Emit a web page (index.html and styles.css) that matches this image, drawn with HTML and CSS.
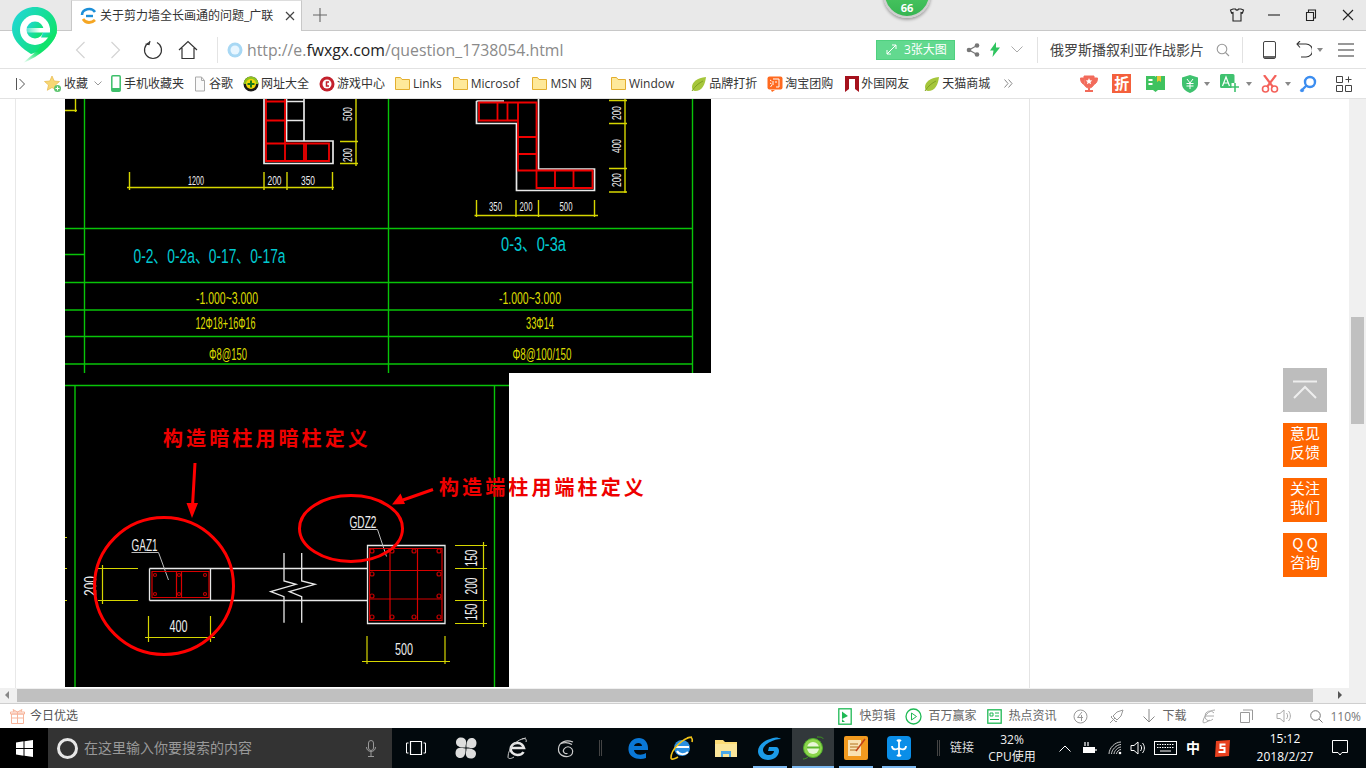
FILE: index.html
```html
<!DOCTYPE html>
<html lang="zh-CN">
<head>
<meta charset="utf-8">
<title>关于剪力墙全长画通的问题_广联达</title>
<link rel="stylesheet" href="styles.css">
</head>
<body>
<div class="browser">
  <header class="tabbar">
    <div class="tab">
      <svg class="tab-fav" width="18" height="18" viewBox="0 0 18 18"><path d="M2 8a7 6 0 0 1 13-3" fill="none" stroke="#1c8fd8" stroke-width="2.6"/><path d="M6 9h7" stroke="#1c8fd8" stroke-width="2.4"/><path d="M3 12c3 5 9 4 12 1" fill="none" stroke="#f5a623" stroke-width="2.8"/></svg>
      <span class="tab-title">关于剪力墙全长画通的问题_广联</span>
      <svg class="tab-close" width="10" height="10" viewBox="0 0 10 10"><path d="M1 1l8 8M9 1l-8 8" stroke="#444" stroke-width="1.2"/></svg>
    </div>
    <svg class="tab-new" width="14" height="14" viewBox="0 0 14 14"><path d="M7 0v14M0 7h14" stroke="#666" stroke-width="1.1"/></svg>
    <div class="win-controls">
      <svg width="16" height="16" viewBox="0 0 16 16"><path d="M4 2h2.500c.5 1.500 2.500 1.500 3 0H12l2.500 1-1 3-1.500-.5V14H4V5.500L2.500 6l-1-3z" fill="none" stroke="#222" stroke-width="1.100"/></svg>
      <svg width="12" height="12" viewBox="0 0 12 12"><path d="M0 6h12" stroke="#222" stroke-width="1.100"/></svg>
      <svg width="12" height="12" viewBox="0 0 12 12"><path d="M1.500 3.500h7v8h-7zM3.500 3.500V1h7v8H8.500" fill="none" stroke="#222" stroke-width="1.100"/></svg>
      <svg width="12" height="12" viewBox="0 0 12 12"><path d="M1 1l10 10M11 1L1 11" stroke="#222" stroke-width="1.100"/></svg>
    </div>
  </header>

  <div class="badge"><span>66</span></div>
  <svg class="logo" width="50" height="58" viewBox="0 0 50 58">
    <defs>
      <linearGradient id="lg" x1="0" y1="0" x2="1" y2="0.6"><stop offset="0" stop-color="#22d6df"/><stop offset="1" stop-color="#0fe36b"/></linearGradient>
      <linearGradient id="tail" x1="1" y1="0" x2="0" y2="1"><stop offset="0" stop-color="#0fe36b"/><stop offset="0.6" stop-color="#0fe36b"/><stop offset="1" stop-color="#0fe36b" stop-opacity="0"/></linearGradient>
      <linearGradient id="bar" x1="0" y1="0" x2="1" y2="0"><stop offset="0" stop-color="#fff" stop-opacity="0.2"/><stop offset="0.6" stop-color="#fff"/></linearGradient>
    </defs>
    <path d="M25 1C12 1 2 11 2 23c0 9 7 17 16 23l3 2c9-3 26-10 26-25C47 11 38 1 25 1z" fill="url(#lg)"/>
    <path d="M47 25C45 38 30 50 13 57c9-8 17-14 20-21z" fill="url(#tail)"/>
    <circle cx="25" cy="24" r="15" fill="#fff"/>
    <circle cx="25" cy="24" r="8.500" fill="url(#lg)"/>
    <rect x="15" y="22" width="25" height="4.500" fill="url(#bar)"/>
    <path d="M33 26.500h8v5H31z" fill="url(#lg)"/>
  </svg>

  <div class="addressbar">
    <div class="nav-group">
      <svg width="11" height="18" viewBox="0 0 11 18"><path d="M9.500 1L1.500 9l8 8" fill="none" stroke="#d4d4d4" stroke-width="1.200"/></svg>
      <svg width="11" height="18" viewBox="0 0 11 18"><path d="M1.500 1l8 8-8 8" fill="none" stroke="#d4d4d4" stroke-width="1.200"/></svg>
      <svg class="ic-reload" width="20" height="20" viewBox="0 0 20 20"><path d="M6 2.500A8.500 8.500 0 1 0 14 2.500M7 1l-1 3.500L2.500 4" fill="none" stroke="#333" stroke-width="1.200"/></svg>
      <svg class="ic-home" width="20" height="20" viewBox="0 0 20 20"><path d="M1 10L10 1.500 19 10M4 8v10.500h12V8" fill="none" stroke="#333" stroke-width="1.200"/></svg>
    </div>
    <div class="url-sep"></div>
    <svg class="ic-site" width="16" height="16" viewBox="0 0 16 16"><circle cx="8" cy="8" r="7.500" fill="#a8d8f4"/><circle cx="8" cy="8" r="4.500" fill="#e8f6ff"/></svg>
    <div class="url"><span class="muted">http://e.</span>fwxgx.com<span class="muted">/question_1738054.html</span></div>
    <div class="big-pic">
      <svg width="11" height="11" viewBox="0 0 11 11"><path d="M1 10L10 1M6 1h4v4M1 6v4h4" fill="none" stroke="#fff" stroke-width="1"/></svg>
      <span>3张大图</span>
    </div>
    <svg class="ic-share" width="14" height="14" viewBox="0 0 14 14"><path d="M11 2.500L3 7l8 4.500" fill="none" stroke="#777" stroke-width="1.200"/><circle cx="11" cy="2.500" r="2.300" fill="#777"/><circle cx="3" cy="7" r="2.300" fill="#777"/><circle cx="11" cy="11.500" r="2.300" fill="#777"/></svg>
    <svg class="ic-bolt" width="10" height="15" viewBox="0 0 10 15"><path d="M6 0L0 8.500h3.500L2.500 15 10 5.500H6z" fill="#2fc45f"/></svg>
    <svg class="ic-down" width="12" height="7" viewBox="0 0 12 7"><path d="M.5.500L6 6 11.500.500" fill="none" stroke="#aaa"/></svg>
    <div class="bar-sep"></div>
    <span class="search-text">俄罗斯播叙利亚作战影片</span>
    <svg class="ic-search" width="14" height="14" viewBox="0 0 14 14"><circle cx="6" cy="6" r="4.800" fill="none" stroke="#999" stroke-width="1.100"/><path d="M9.500 9.500L13 13" stroke="#999" stroke-width="1.100"/></svg>
    <div class="bar-sep sep2"></div>
    <svg class="ic-phone" width="13" height="18" viewBox="0 0 13 18"><rect x=".5" y=".5" width="12" height="17" rx="1.500" fill="none" stroke="#444"/><path d="M1 15h11v2H1z" fill="#666"/></svg>
    <svg class="ic-undo" width="16" height="18" viewBox="0 0 16 18"><path d="M1 3h9a5 5 0 0 1 0 13H5M4 0L1 3l3 3.500" fill="none" stroke="#333" stroke-width="1.100"/></svg>
    <span class="caret"></span>
    <svg class="ic-menu" width="16" height="14" viewBox="0 0 16 14"><path d="M0 1h16M0 7h16M0 13h16" stroke="#333" stroke-width="1.200"/></svg>
  </div>

  <nav class="bookmarks">
    <svg class="ic-side" width="9" height="12" viewBox="0 0 9 12"><path d="M.5 0v12M3.500 1L8.500 6l-5 5" fill="none" stroke="#555"/></svg>
    <div class="bm"><svg width="18" height="18" viewBox="0 0 18 18"><path d="M8 1l2.200 5 5.300.5-4 3.500 1.200 5.300L8 12.500 3.300 15.300 4.500 10 .5 6.500 5.800 6z" fill="#f7d774" stroke="#e8b84a" stroke-width=".7"/><circle cx="13.500" cy="13.500" r="3.500" fill="#5cc46e"/><path d="M11.500 13.500h4M13.500 11.500v4" stroke="#fff"/></svg><span>收藏</span><svg class="bm-caret" width="8" height="5" viewBox="0 0 8 5"><path d="M.5.500L4 4 7.500.500" fill="none" stroke="#999"/></svg></div>
    <div class="bm bm-phone"><svg width="10" height="17" viewBox="0 0 10 17"><rect x=".8" y=".8" width="8.400" height="15.400" rx="1" fill="#fff" stroke="#3dbf6a" stroke-width="1.500"/><path d="M1 13h8v3H1z" fill="#3dbf6a"/></svg><span>手机收藏夹</span></div>
    <div class="bm"><svg width="14" height="16" viewBox="0 0 14 16"><path d="M2.500 1h6l3 3.500V15h-9z" fill="#fafafa" stroke="#aaa"/><path d="M8.500 1v3.500h3" fill="none" stroke="#aaa"/></svg><span>谷歌</span></div>
    <div class="bm"><svg width="16" height="16" viewBox="0 0 16 16"><circle cx="8" cy="8" r="7.500" fill="#1b1b1b"/><path d="M8 .5A7.500 7.500 0 0 1 15.500 8H.5A7.500 7.500 0 0 1 8 .5z" fill="#8fc31f"/><circle cx="8" cy="8" r="5" fill="#f5d90a"/><path d="M8 4.500v7M4.500 8h7" stroke="#1c7a1c" stroke-width="2"/></svg><span>网址大全</span></div>
    <div class="bm"><svg width="16" height="16" viewBox="0 0 16 16"><circle cx="8" cy="8" r="7.500" fill="#c3202c"/><circle cx="8" cy="8" r="4.500" fill="#fff"/><path d="M10 6H7.500v4H10" fill="none" stroke="#c3202c" stroke-width="1.500"/></svg><span>游戏中心</span></div>
    <div class="bm bm-f bm-links"><svg width="15" height="13" viewBox="0 0 15 13"><path d="M.5 12.500V.5h5l1.500 2h7.500v10z" fill="#fee99a" stroke="#e3ae2e"/></svg><span>Links</span></div>
    <div class="bm bm-f bm-ms"><svg width="15" height="13" viewBox="0 0 15 13"><path d="M.5 12.500V.5h5l1.500 2h7.500v10z" fill="#fee99a" stroke="#e3ae2e"/></svg><span>Microsof</span></div>
    <div class="bm bm-f bm-msn"><svg width="15" height="13" viewBox="0 0 15 13"><path d="M.5 12.500V.5h5l1.500 2h7.500v10z" fill="#fee99a" stroke="#e3ae2e"/></svg><span>MSN 网</span></div>
    <div class="bm bm-f bm-win"><svg width="15" height="13" viewBox="0 0 15 13"><path d="M.5 12.500V.5h5l1.500 2h7.500v10z" fill="#fee99a" stroke="#e3ae2e"/></svg><span>Window</span></div>
    <div class="bm"><svg width="16" height="16" viewBox="0 0 16 16"><path d="M15 1C6 2 1 6 1 11c0 2 1 4 3 4 7 0 10-6 11-14z" fill="#a5c63b"/><path d="M1 15C4 10 8 7 12 5" stroke="#7f9f23" fill="none"/></svg><span>品牌打折</span></div>
    <div class="bm bm-tao"><svg width="16" height="16" viewBox="0 0 16 16"><rect x=".5" y=".5" width="15" height="13" rx="2" fill="#ff6a1f"/><path d="M4 14l1 2 3-2z" fill="#ff6a1f"/><path d="M3 4l1.500 1M3 7l1.500 1M3.500 11l1.500-2M6 3h6v8H9M6 5v4M8 6h2" stroke="#fff" fill="none"/></svg><span>淘宝团购</span></div>
    <div class="bm bm-wai"><svg width="14" height="16" viewBox="0 0 14 16"><path d="M0 0h14v16l-4-3V3H4v10l-4 3z" fill="#a5111c"/></svg><span>外国网友</span></div>
    <div class="bm"><svg width="16" height="16" viewBox="0 0 16 16"><path d="M15 1C6 2 1 6 1 11c0 2 1 4 3 4 7 0 10-6 11-14z" fill="#a5c63b"/><path d="M1 15C4 10 8 7 12 5" stroke="#7f9f23" fill="none"/></svg><span>天猫商城</span></div>
    <svg class="bm-more" width="9" height="9" viewBox="0 0 9 9"><path d="M.5.500L4 4.500l-3.500 4M4.500.500L8 4.500l-3.500 4" fill="none" stroke="#888"/></svg>
    <div class="bm-tools">
      <svg class="t-trophy" width="20" height="18" viewBox="0 0 20 18"><path d="M5 1h10v7a5 5 0 0 1-10 0zM5 3H1.500c0 4 1.500 6 4 6.500M15 3h3.500c0 4-1.500 6-4 6.500" fill="#f26b5b" stroke="#f26b5b"/><path d="M10 3l1 2.200 2.300.2-1.800 1.500.6 2.300L10 7.900 7.900 9.200l.6-2.300-1.800-1.500L9 5.200z" fill="#fff"/><path d="M9 13h2v2h3v2H6v-2h3z" fill="#f26b5b"/></svg>
      <div class="t-zhe">折</div>
      <svg class="t-book" width="19" height="18" viewBox="0 0 19 18"><path d="M0 1h8c1 0 1.500.5 1.500 1 0-.5.5-1 1.500-1h8v14h-7l-2.500 2-2.500-2H0z" fill="#3fc25f"/><path d="M11 1h4v6l-2-1.500L11 7z" fill="#e6c636"/><path d="M2.500 4h4v2h-4zM2.500 8h4v2h-4z" fill="#fff"/></svg>
      <svg class="t-shield" width="16" height="18" viewBox="0 0 16 18"><path d="M8 0l8 2.500V9c0 4-3.500 7.500-8 9-4.500-1.500-8-5-8-9V2.500z" fill="#3fc26f"/><path d="M5 4l3 4 3-4M4.500 8.500h7M4.500 11h7M8 8v6" stroke="#fff" fill="none"/></svg>
      <span class="caret c-shield"></span>
      <svg class="t-aplus" width="20" height="19" viewBox="0 0 20 19"><path d="M1.500 0h11.500a1.500 1.500 0 0 1 1.500 1.500V9h-3v5H1.500A1.500 1.500 0 0 1 0 12.500v-11A1.500 1.500 0 0 1 1.500 0z" fill="#3fc26f"/><path d="M2.500 12L6 3l3.500 9M4 9h4" stroke="#fff" fill="none" stroke-width="1.200"/><path d="M15 9v4h4M15 13h-4M15 13v5" stroke="#3fc26f" stroke-width="1.600" fill="none"/></svg>
      <span class="caret c-aplus"></span>
      <svg class="t-cut" width="18" height="18" viewBox="0 0 18 18"><path d="M3 0l9 12M15 0L6 12" stroke="#f4625b" stroke-width="2.200"/><circle cx="4.500" cy="14" r="3" fill="none" stroke="#f4625b" stroke-width="1.600"/><circle cx="13.500" cy="14" r="3" fill="none" stroke="#f4625b" stroke-width="1.600"/></svg>
      <span class="caret c-cut"></span>
      <svg class="t-key" width="18" height="18" viewBox="0 0 18 18"><circle cx="11" cy="7" r="5" fill="none" stroke="#3c8df0" stroke-width="2.400"/><path d="M7.500 10.500L1.500 16.500M2 14l2.500 2.500" stroke="#3c8df0" stroke-width="2.400"/></svg>
      <svg class="t-grid" width="16" height="16" viewBox="0 0 16 16"><path d="M.5.500h6v6h-6zM.5 9.500h6v6h-6zM9.500 9.500h6v6h-6zM12.500.500v6M9.500 3.500h6" fill="none" stroke="#444"/></svg>
    </div>
  </nav>

  <main class="viewport">
    <div class="page">
      <svg class="cad" viewBox="65 99 600 588" width="600" height="588" role="img" aria-label="剪力墙构造图">
        <rect x="65" y="99" width="646" height="274" fill="#000"/>
        <rect x="65" y="373" width="444" height="314" fill="#000"/>

        <g class="g-green">
          <path d="M65 228.500H692.500M65 254.500H84.500M65 282.500H692.500M65 310H692.500M65 336.500H692.500M65 364H692.500"/>
          <path d="M84.500 99V373M388.500 99V373M692.500 99V373"/>
          <path d="M65 385.500H509M75 385V687M494.500 385V687"/>
        </g>

        <g class="g-white g-white-bold">
          <path d="M264 99V163.500H333V141H286.500V99M304 99V141M286.500 101.500H304M286.500 120.500H304"/>
          <path d="M476.500 101V123.500H516.500V190.500H594.500V169H538.500V99M476.500 101H504"/>
        </g>
        <g class="g-red">
          <path d="M266 99V161H329V143.500H266M266 101.500H285M266 120.500H285M285 99V161M304 143.500V161M306 143.500V161"/>
          <path d="M479 102.500H536.500V188H592.500V170.500H518V120.500H479ZM497.500 102.500V120.500M507.500 102.500V120.500M518 102.500V120.500M518 137H536.500M518 154H536.500M536.500 170.500V188M555 170.500V188M573.500 170.500V188"/>
        </g>

        <g class="g-yellow g-yellow-bold">
          <path d="M127 187.500H334M129.500 172V190M264 172V190M287 172V190M332.500 172V190"/>
          <path d="M356 99V166M340 141.500H358M340 163.500H358M65 110.500H77M75.500 99V112"/>
          <path d="M625 99V193M609 100.500H627M609 123.500H627M609 168.500H627M609 192H627"/>
          <path d="M474.500 215.500H598M476.500 200V217M516 200V217M538.500 200V217M594.500 200V217"/>
        </g>

        <g class="t-dim">
          <text x="196" y="184.500" textLength="16" lengthAdjust="spacingAndGlyphs">1200</text>
          <text x="274.500" y="184.500" textLength="14" lengthAdjust="spacingAndGlyphs">200</text>
          <text x="308" y="184.500" textLength="14" lengthAdjust="spacingAndGlyphs">350</text>
          <text transform="translate(352 114) rotate(-90)" textLength="14" lengthAdjust="spacingAndGlyphs">500</text>
          <text transform="translate(352 155) rotate(-90)" textLength="14" lengthAdjust="spacingAndGlyphs">200</text>
          <text transform="translate(621 113) rotate(-90)" textLength="14" lengthAdjust="spacingAndGlyphs">200</text>
          <text transform="translate(621 146) rotate(-90)" textLength="14" lengthAdjust="spacingAndGlyphs">400</text>
          <text transform="translate(621 180) rotate(-90)" textLength="14" lengthAdjust="spacingAndGlyphs">200</text>
          <text x="495.500" y="211" textLength="13" lengthAdjust="spacingAndGlyphs">350</text>
          <text x="526" y="211" textLength="13" lengthAdjust="spacingAndGlyphs">200</text>
          <text x="566" y="211" textLength="13" lengthAdjust="spacingAndGlyphs">500</text>
        </g>

        <g class="t-cyan">
          <text x="209.500" y="263" textLength="152" lengthAdjust="spacingAndGlyphs">0-2、0-2a、0-17、0-17a</text>
          <text x="533.500" y="251" textLength="65" lengthAdjust="spacingAndGlyphs">0-3、0-3a</text>
        </g>
        <g class="t-yellow">
          <text x="227" y="304" textLength="62" lengthAdjust="spacingAndGlyphs">-1.000~3.000</text>
          <text x="530" y="304" textLength="62" lengthAdjust="spacingAndGlyphs">-1.000~3.000</text>
          <text x="225.500" y="329" textLength="60" lengthAdjust="spacingAndGlyphs">12Φ18+16Φ16</text>
          <text x="540" y="329" textLength="28" lengthAdjust="spacingAndGlyphs">33Φ14</text>
          <text x="228" y="360" textLength="38" lengthAdjust="spacingAndGlyphs">Φ8@150</text>
          <text x="542" y="360" textLength="59" lengthAdjust="spacingAndGlyphs">Φ8@100/150</text>
        </g>

        <g class="g-white">
          <path d="M149.500 568.500H367M149.500 600.500H367M149.500 568.500V600.500M210.500 568.500V600.500"/>
          <path d="M367.500 545.500H445V623.500H367.500Z"/>
          <path d="M284 553V581L296 584.300 270.700 591.700 284 596.700V622.700M301.700 553V581L315 584.300 289.300 591.700 301.700 596.700V622.700"/>
        </g>
        <g class="g-lead">
          <path d="M131.500 552.500H158.500L168.500 580M351 529.500H377.500L386.500 556.500"/>
        </g>
        <g class="g-red-thin">
          <path d="M152 571.500H209V597.500H152ZM176.500 571.500V597.500M181.500 571.500V597.500"/>
          <path d="M369.500 548.500H442V620.500H369.500ZM390 548.500V620.500M417.500 548.500V620.500M369.500 570.500H442M369.500 599H442"/>
        </g>
        <g class="g-dots">
          <circle cx="155" cy="575" r="1.500"/><circle cx="205" cy="575" r="1.500"/><circle cx="155" cy="594" r="1.500"/><circle cx="205" cy="594" r="1.500"/><circle cx="179" cy="575" r="1.500"/><circle cx="179" cy="594" r="1.500"/>
          <circle cx="372" cy="551" r="2"/><circle cx="392" cy="551" r="2"/><circle cx="414" cy="551" r="2"/><circle cx="439" cy="551" r="2"/>
          <circle cx="372" cy="574" r="2"/><circle cx="439" cy="574" r="2"/><circle cx="372" cy="596" r="2"/><circle cx="439" cy="596" r="2"/>
          <circle cx="372" cy="617" r="2"/><circle cx="392" cy="617" r="2"/><circle cx="414" cy="617" r="2"/><circle cx="439" cy="617" r="2"/>
        </g>
        <g class="g-yellow">
          <path d="M98 568.500H138M98 600.500H138M102.500 565V604M65 537.500H67M65 568.500H67M65 600.500H67"/>
          <path d="M145 637.500H215M148.500 616V642M210.500 616V642"/>
          <path d="M362 661.500H450M367 636V664M445 636V664"/>
          <path d="M483.500 542V627M455 545.500H487M455 568.500H487M455 600.500H487M455 623.500H487"/>
        </g>
        <g class="t-dim t-dim-big">
          <text transform="translate(96 586) rotate(-90)" textLength="20" lengthAdjust="spacingAndGlyphs">200</text>
          <text x="178.500" y="632" textLength="18" lengthAdjust="spacingAndGlyphs">400</text>
          <text x="404" y="655" textLength="18" lengthAdjust="spacingAndGlyphs">500</text>
          <text transform="translate(477 558) rotate(-90)" textLength="17" lengthAdjust="spacingAndGlyphs">150</text>
          <text transform="translate(477 586) rotate(-90)" textLength="17" lengthAdjust="spacingAndGlyphs">200</text>
          <text transform="translate(477 612) rotate(-90)" textLength="17" lengthAdjust="spacingAndGlyphs">150</text>
          <text x="144.500" y="551" textLength="26" lengthAdjust="spacingAndGlyphs">GAZ1</text>
          <text x="363" y="528" textLength="27" lengthAdjust="spacingAndGlyphs">GDZ2</text>
        </g>

        <g class="g-ring">
          <ellipse cx="164" cy="586" rx="69.500" ry="68.500"/>
          <ellipse cx="351" cy="528.500" rx="51.500" ry="33"/>
          <path d="M195 463L192.500 506M433 489.500L403 500"/>
        </g>
        <path class="g-head" d="M186.500 503H198L192 518ZM400.500 493.500L405 504 392 504.500Z"/>
        <text class="t-note" x="163" y="446">构造暗柱用暗柱定义</text>
        <text class="t-note" x="439" y="495">构造端柱用端柱定义</text>
      </svg>
    </div>
    <div class="divider-left"></div>
    <div class="divider-right"></div>
    <aside class="float-tools">
      <div class="float-top"><svg width="26" height="20" viewBox="0 0 26 20"><path d="M1 1.500h24M2 18L13 7l11 11" fill="none" stroke="#eee" stroke-width="2"/></svg></div>
      <div class="float-btn">意见<br>反馈</div>
      <div class="float-btn">关注<br>我们</div>
      <div class="float-btn">Q Q<br>咨询</div>
    </aside>
    <div class="vscroll"><div class="vthumb"></div></div>
  </main>

  <div class="hscroll">
    <span class="arrow-l"></span>
    <div class="hthumb"></div>
    <span class="arrow-r"></span>
  </div>

  <footer class="statusbar">
    <svg class="ic-gift" width="15" height="15" viewBox="0 0 15 15"><path d="M1.500 5h12v9.500h-12zM.5 3h14v2H.5zM7.500 3v11.500M1.500 9h12M4 3L3 .5 7.500 3 12 .5 11 3" fill="none" stroke="#f7b49b"/></svg>
    <span class="st-today">今日优选</span>
    <div class="st-right">
      <svg class="s1" width="14" height="17" viewBox="0 0 14 17"><rect x=".8" y=".8" width="12.400" height="15.400" fill="none" stroke="#1fb955" stroke-width="1.300"/><path d="M4 3.500L10 8 4 11l3 3H4z" fill="#1fb955"/></svg>
      <span class="st-t t1">快剪辑</span>
      <svg class="s2" width="17" height="17" viewBox="0 0 17 17"><circle cx="8.500" cy="8.500" r="7.500" fill="none" stroke="#1fb955" stroke-width="1.300"/><path d="M6.500 5l5 3.500-5 3.500z" fill="none" stroke="#1fb955"/></svg>
      <span class="st-t t2">百万赢家</span>
      <svg class="s3" width="15" height="15" viewBox="0 0 15 15"><rect x=".8" y=".8" width="13.400" height="13.400" fill="none" stroke="#1fb955" stroke-width="1.300"/><path d="M3 4h3v3H3zM8 4h4M8 7h4M3 10.500h9" fill="none" stroke="#1fb955"/></svg>
      <span class="st-t t3">热点资讯</span>
      <svg class="s4" width="15" height="15" viewBox="0 0 15 15"><circle cx="7.500" cy="7.500" r="6.500" fill="none" stroke="#999"/><path d="M9 3L4.500 8.500H10M8.500 6v6" fill="none" stroke="#999"/></svg>
      <svg class="s5" width="15" height="15" viewBox="0 0 15 15"><path d="M14 1L8 3 4 7l4 4 4-4zM6 9l-5 5M3 7l-1 1 5 5 1-1" fill="none" stroke="#999"/></svg>
      <svg class="s6" width="12" height="14" viewBox="0 0 12 14"><path d="M6 0v13M.5 7.500L6 13l5.500-5.500" fill="none" stroke="#888"/></svg>
      <span class="st-t t6">下载</span>
      <svg class="s7" width="14" height="15" viewBox="0 0 14 15"><path d="M12 7H3M3 7a5 5 0 0 1 9-3M3 7c0 5 5 6 8 3M13 1C7 1 1 8 1 13c0 2 4 0 7-2" fill="none" stroke="#aaa"/></svg>
      <svg class="s8" width="13" height="14" viewBox="0 0 13 14"><path d="M.5 3.500h9v10h-9zM3 1h9.500v10" fill="none" stroke="#999"/></svg>
      <svg class="s9" width="15" height="14" viewBox="0 0 15 14"><path d="M1 4.500h3L8 1v12L4 9.500H1zM10.500 4c1.500 2 1.500 4 0 6M12.500 2c2.500 3 2.500 7 0 10" fill="none" stroke="#aaa"/></svg>
      <svg class="s10" width="13" height="13" viewBox="0 0 13 13"><circle cx="5.500" cy="5.500" r="4.800" fill="none" stroke="#777"/><path d="M9 9l3.500 3.500" stroke="#777"/></svg>
      <span class="st-zoom">110%</span>
    </div>
  </footer>

  <div class="taskbar">
    <div class="start"><svg width="17" height="17" viewBox="0 0 17 17"><path d="M0 2.500L7.500 1.300V8H0zM8.500 1.200L17 0v8H8.500zM0 9h7.500v6.700L0 14.500zM8.500 9H17v8l-8.500-1.200z" fill="#fff"/></svg></div>
    <div class="searchbox">
      <span class="cortana"></span>
      <span class="search-hint">在这里输入你要搜索的内容</span>
      <svg width="10" height="17" viewBox="0 0 10 17"><rect x="2.500" y=".5" width="5" height="10" rx="2.500" fill="none" stroke="#999"/><path d="M.5 7c0 6 9 6 9 0M5 12v4M2 16.500h6" fill="none" stroke="#999"/></svg>
    </div>
    <svg class="tk-view" width="20" height="14" viewBox="0 0 20 14"><path d="M4.500.5h11v13h-11z" fill="none" stroke="#fff" stroke-width="1.200"/><path d="M2.500 2H.5v10h2M17.500 2h2v10h-2" fill="none" stroke="#fff"/></svg>
    <svg class="tk-fan" width="22" height="22" viewBox="0 0 22 22"><g fill="#ddd"><path id="petal" d="M10.500 10.500C6 11 1 9.500 1 5.500 1 2.500 3 .5 6 .5c3 0 5 1.500 5.200 4.500.1 2-.7 3-.7 5.500z"/><path transform="rotate(90 11 11)" d="M10.500 10.500C6 11 1 9.500 1 5.500 1 2.500 3 .5 6 .5c3 0 5 1.500 5.200 4.500.1 2-.7 3-.7 5.500z"/><path transform="rotate(180 11 11)" d="M10.500 10.500C6 11 1 9.500 1 5.500 1 2.500 3 .5 6 .5c3 0 5 1.500 5.200 4.500.1 2-.7 3-.7 5.500z"/><path transform="rotate(270 11 11)" d="M10.500 10.500C6 11 1 9.500 1 5.500 1 2.500 3 .5 6 .5c3 0 5 1.500 5.200 4.500.1 2-.7 3-.7 5.500z"/></g></svg>
    <svg class="tk-ie" width="21" height="23" viewBox="0 0 21 23"><path d="M4 11h13a7 7 0 0 0-13-1c-1.500 5 3 8 6.500 8 2.500 0 5-1 6-3" fill="none" stroke="#e8e8e8" stroke-width="2.500"/><path d="M19 1C10 2 1 11 1 20c0 2 3 2 6 0M15 2c3-1 5 0 4 3" fill="none" stroke="#ccc"/></svg>
    <svg class="tk-swirl" width="18" height="19" viewBox="0 0 18 19"><path d="M16 3C9 0 2 3 1.500 9.500S7 18 11 17.500 17 13 15 10 9 7 7 10s1 5 3.500 4.500M3 5c4-2 8-2 12 .5" fill="none" stroke="#ccc" stroke-width="1.200"/></svg>
    <div class="tk-sep s-a"></div>
    <svg class="tk-edge" width="20" height="21" viewBox="0 0 20 21"><path d="M.5 12C0 5 5 0 11 0c5 0 9 4 9 10v2H6c.5 5 7 6 12 3v5c-7 2.500-17 0-17.500-8zM6 8h8c0-4-7-4-8 0z" fill="#0a78d7"/></svg>
    <svg class="tk-ie2" width="24" height="24" viewBox="0 0 24 24"><circle cx="12" cy="12" r="8" fill="#2b8fe0"/><path d="M6 11h13M7 15c2 4 8 4 11 1" fill="none" stroke="#fff" stroke-width="2"/><path d="M22 1C13 2 1 13 1 22c0 2 4 1 7-1M17 2c4-2 6 0 5 4" fill="none" stroke="#f2c417" stroke-width="1.600"/></svg>
    <svg class="tk-folder" width="22" height="19" viewBox="0 0 22 19"><path d="M0 1h8l2 2h12v15H0z" fill="#fcdc76"/><path d="M0 5h22v13H0z" fill="#fbe69a"/><path d="M6 18v-6h10v6h-2v-3H8v3z" fill="#4aa8e8"/></svg>
    <svg class="tk-g" width="24" height="23" viewBox="0 0 24 23"><path d="M24 2c-3-2-7-2-11 0C6 4 1 9 1 14s4 9 10 9 11-4 11-9c0-2-1-4-3-4h-7l-1 4h6c0 2-2 4-5 4s-6-2-6-5 3-6 7-8c4-2 7-3 11-3z" fill="#1b9be8"/></svg>
    <div class="tk-active"><svg width="22" height="24" viewBox="0 0 22 24"><circle cx="11" cy="12" r="9.500" fill="#8bd44b" stroke="#4fae2b"/><circle cx="11" cy="12" r="6" fill="#e8f7d8"/><path d="M5 11.500h13" stroke="#5cb82e" stroke-width="2"/><path d="M15 1c3 0 6 0 6 2M1 23c2 0 4-1 5-2" stroke="#3d9a20" fill="none"/></svg></div>
    <svg class="tk-note" width="24" height="24" viewBox="0 0 24 24"><rect width="24" height="24" rx="2" fill="#f29a1f"/><path d="M4 4h13v16H4z" fill="#f9e2b4"/><path d="M6 8h8M6 11h8M6 14h6" stroke="#b2701d"/><path d="M21 3L12 15" stroke="#c2441a" stroke-width="1.600"/></svg>
    <svg class="tk-blue" width="24" height="24" viewBox="0 0 24 24"><rect width="24" height="24" rx="4" fill="#0a8ee8"/><path d="M12 4v16M5 10c0 4 4 4 7 2 3 2 7 2 7-2M10 5c1-1 3-1 4 0M10 19c1 1 3 1 4 0" fill="none" stroke="#fff" stroke-width="1.800"/></svg>
    <i class="tk-under u1"></i><i class="tk-under u2"></i><i class="tk-under u3"></i><i class="tk-under u4"></i>
    <div class="tk-sep s-b"></div>
    <span class="tk-links">链接</span>
    <div class="tk-cpu"><span>32%</span><span>CPU使用</span></div>
    <svg class="tr-up" width="12" height="7" viewBox="0 0 12 7"><path d="M.5 6.500L6 1l5.500 5.500" fill="none" stroke="#fff"/></svg>
    <svg class="tr-bat" width="16" height="14" viewBox="0 0 16 14"><path d="M1 6h12v6H1z" fill="#fff"/><path d="M3 1v4M6 1v4M14 8v2" stroke="#fff" stroke-width="1.200"/></svg>
    <svg class="tr-wifi" width="14" height="14" viewBox="0 0 14 14"><path d="M1 13C1 7 7 1 13 1M3.500 13c0-4 5-9.500 9.500-9.500M6 13c0-3 4-7 7-7M8.500 13c0-2 2.500-4.500 4.500-4.500" fill="none" stroke="#ccc"/><circle cx="12" cy="12" r="1.300" fill="#fff"/></svg>
    <svg class="tr-vol" width="15" height="14" viewBox="0 0 15 14"><path d="M1 4.500h3L8 1v12L4 9.500H1zM10.500 4c1.500 2 1.500 4 0 6M12.500 2c2.500 3 2.500 7 0 10" fill="none" stroke="#fff"/></svg>
    <svg class="tr-kb" width="23" height="14" viewBox="0 0 23 14"><rect x=".5" y=".5" width="22" height="13" fill="none" stroke="#fff"/><path d="M3 3.500h17M3 6.500h17" stroke="#fff" stroke-dasharray="1.500 1"/><path d="M6 10h11" stroke="#fff"/></svg>
    <span class="tr-zh">中</span>
    <svg class="tr-sogou" width="16" height="17" viewBox="0 0 16 17"><path d="M2 1l14-1-1 16-14 1z" fill="#e8411f"/><path d="M11.500 4.500H6.500v3.500h4v4H4.500" fill="none" stroke="#fff" stroke-width="2"/></svg>
    <div class="tk-clock"><span>15:12</span><span>2018/2/27</span></div>
    <svg class="tr-notif" width="16" height="16" viewBox="0 0 16 16"><path d="M.5.500h15v12H10l-2 2.500-2-2.500H.5z" fill="none" stroke="#fff"/></svg>
  </div>
</div>
</body>
</html>
```
FILE: styles.css
```css
* { box-sizing: border-box; }
html, body { margin: 0; padding: 0; height: 100%; overflow: hidden; }
body { font-family: "Open Sans", "Noto Sans CJK SC", sans-serif; color: #333; background: #fff; }
svg { display: block; flex: none; }

.browser { position: relative; width: 1366px; height: 768px; display: flex; flex-direction: column; overflow: hidden; }

/* tab bar */
.tabbar { height: 31px; background: #e9e9e9; border-bottom: 1px solid #c8c8c8; display: flex; align-items: flex-start; flex: none; padding-left: 71px; }
.tab { width: 231px; height: 31px; background: #fff; border: 1px solid #c8c8c8; border-top-color: #ddd; border-bottom: 0; display: flex; align-items: center; padding-left: 8px; }
.tab-title { font-size: 12px; width: 174px; margin-left: 2px; white-space: nowrap; color: #333; line-height: 28px; }
.tab-close { margin-left: 11px; }
.tab-new { margin: 8px 0 0 11px; }
.win-controls { margin-left: auto; height: 30px; display: flex; align-items: center; gap: 25px; padding-right: 12px; }
.win-controls svg:first-child { margin-right: -2px; }

.badge { position: absolute; left: 883px; top: -30px; width: 48px; height: 48px; border-radius: 50%; background: linear-gradient(#5bd66e, #36b552); border: 2px solid #cfcfcf; box-shadow: 0 2px 3px rgba(0,0,0,.3); text-align: center; z-index: 3; }
.badge span { display: block; margin-top: 29px; font-size: 11px; font-weight: 700; color: #fff; line-height: 14px; }
.logo { position: absolute; left: 10px; top: 6px; z-index: 3; }

/* address bar */
.addressbar { height: 38px; border-bottom: 1px solid #e2e2e2; display: flex; align-items: center; flex: none; padding-left: 75px; background: #fff; }
.nav-group { display: flex; align-items: center; gap: 24px; width: 142px; }
.ic-reload { margin-left: -2px; }
.ic-home { margin-left: -9px; }
.url-sep { width: 1px; height: 26px; background: #e4e4e4; }
.ic-site { margin-left: 9px; }
.url { font-size: 15.800px; margin-left: 4px; width: 629px; white-space: nowrap; color: #222; }
.url .muted { color: #8a8a8a; }
.big-pic { width: 79px; height: 20px; background: #62d98f; border: 1px solid #4fd07f; display: flex; align-items: center; padding-left: 9px; gap: 7px; color: #fff; font-size: 12px; line-height: 18px; }
.ic-share { margin-left: 11px; }
.ic-bolt { margin-left: 10px; }
.ic-down { margin-left: 11px; }
.bar-sep { width: 1px; height: 26px; background: #e2e2e2; margin-left: 14px; }
.search-text { font-size: 14px; margin-left: 12px; width: 167px; white-space: nowrap; color: #444; line-height: 20px; }
.ic-search { margin-left: -1px; }
.sep2 { margin-left: 12px; }
.ic-phone { margin-left: 20px; }
.ic-undo { margin-left: 20px; }
.caret { display: inline-block; width: 0; height: 0; border: 3px solid transparent; border-top: 4px solid #888; border-bottom: 0; flex: none; }
.addressbar .caret { margin-left: 5px; }
.ic-menu { margin-left: 15px; }

/* bookmarks */
.bookmarks { height: 30px; border-bottom: 1px solid #e2e2e2; display: flex; align-items: center; padding-left: 16px; flex: none; background: #fff; }
.ic-side { margin-right: 19px; }
.bm { display: flex; align-items: center; gap: 2px; font-size: 12px; color: #333; white-space: nowrap; margin-right: 10px; line-height: 16px; }
.bm-caret { margin-left: 4px; margin-right: -1px; }
.bm-phone { gap: 3px; margin-right: 9px; }
.bm-f { gap: 3px; }
.bm-links { margin-right: 11px; }
.bm-ms { margin-right: 13px; }
.bm-msn { margin-right: 19px; }
.bm-win { margin-right: 17px; }
.bm-tao { margin-right: 12px; }
.bm-wai { margin-right: 15px; }
.bm-more { margin-left: 4px; }
.bm-tools { margin-left: 66px; display: flex; align-items: center; }
.t-zhe { width: 19px; height: 19px; margin-left: 13px; background: #f4603c; color: #fff; font-size: 15px; line-height: 19px; text-align: center; font-weight: 700; }
.t-book { margin-left: 15px; }
.t-shield { margin-left: 17px; }
.c-shield { margin-left: 6px; }
.t-aplus { margin-left: 10px; }
.c-aplus { margin-left: 6px; }
.t-cut { margin-left: 9px; }
.c-cut { margin-left: 6px; }
.t-key { margin-left: 8px; }
.t-grid { margin-left: 19px; }

/* page */
.viewport { position: relative; flex: 1; min-height: 0; display: flex; background: #fff; overflow: hidden; }
.page { flex: 1; padding-left: 65px; }
.cad { display: block; overflow: visible; }
.cad text { font-family: "Liberation Sans Narrow", "Liberation Sans", sans-serif; }
.g-green path { stroke: #08c408; stroke-width: 1.400; fill: none; }
.g-white path { stroke: #e8e8e8; stroke-width: 1.300; fill: none; }
.g-white-bold path { stroke-width: 1.700; }
.g-lead path { stroke: #bbb; stroke-width: 1; fill: none; }
.g-red path { stroke: #f00000; stroke-width: 1.800; fill: none; }
.g-red-thin path { stroke: #d80000; stroke-width: 1.200; fill: none; }
.g-dots circle { fill: none; stroke: #c00000; stroke-width: 1.200; }
.g-yellow path { stroke: #d6d600; stroke-width: 1.200; fill: none; }
.g-yellow-bold path { stroke-width: 1.400; }
.t-dim text { fill: #eee; font-size: 13px; text-anchor: middle; }
.t-dim-big text { font-size: 17px; }
.t-cyan text { fill: #00c8d0; font-size: 20px; text-anchor: middle; }
.t-yellow text { fill: #dcdc00; font-size: 17px; text-anchor: middle; }
.g-ring ellipse, .g-ring path { fill: none; stroke: #f00; stroke-width: 3; }
.g-head { fill: #f00; }
.cad .t-note { fill: #ee0000; font-family: "Noto Sans CJK SC", sans-serif; font-size: 20px; font-weight: 700; letter-spacing: 3.100px; }

.divider-left { position: absolute; left: 15px; top: 0; bottom: 0; width: 1px; background: #e8e8e8; }
.divider-right { position: absolute; left: 1029px; top: 0; bottom: 0; width: 1px; background: #e4e4e4; }

.float-tools { position: absolute; left: 1283px; top: 269px; width: 44px; display: flex; flex-direction: column; gap: 11px; }
.float-top { height: 44px; background: #bdbdbd; display: flex; align-items: center; justify-content: center; }
.float-btn { height: 44px; background: #ff6600; color: #fff; font-size: 15px; line-height: 19px; text-align: center; font-family: "Noto Sans CJK SC", sans-serif; }

.vscroll { width: 17px; background: #f0f0f0; flex: none; padding: 218px 2px 0; }
.vthumb { height: 107px; width: 13px; background: #c0c0c0; }

.hscroll { height: 16px; background: #f0f0f0; border-bottom: 1px solid #cfcfcf; flex: none; display: flex; align-items: center; padding: 0 22px 1px 5px; }
.arrow-l { width: 0; height: 0; border: 4px solid transparent; border-right: 4px solid #888; border-left: 0; }
.hthumb { height: 13px; width: 1296px; background: #c0c0c0; margin-left: 8px; }
.arrow-r { width: 0; height: 0; border: 4px solid transparent; border-left: 4px solid #555; border-right: 0; margin-left: 25px; }

/* status */
.statusbar { height: 24px; background: #fff; flex: none; display: flex; align-items: center; padding-left: 10px; position: relative; font-size: 12px; color: #666; }
.st-today { margin-left: 5px; line-height: 16px; color: #555; }
.st-right { margin-left: auto; display: flex; align-items: center; padding-right: 5px; }
.st-t { line-height: 16px; }
.s1 { margin-right: 7px; }
.s2 { margin-left: 10px; margin-right: 6px; }
.s3 { margin-left: 11px; margin-right: 6px; }
.s4 { margin-left: 17px; }
.s5 { margin-left: 21px; }
.s6 { margin-left: 19px; margin-right: 7px; }
.s7 { margin-left: 16px; }
.s8 { margin-left: 24px; }
.s9 { margin-left: 23px; }
.s10 { margin-left: 19px; margin-right: 7px; }
.st-zoom { font-size: 12px; color: #777; }

/* taskbar */
.taskbar { height: 40px; background: #02090d; flex: none; display: flex; align-items: center; position: relative; color: #fff; }
.start { width: 48px; height: 40px; background: #000; display: flex; align-items: center; justify-content: center; }
.searchbox { width: 344px; height: 40px; background: #333; display: flex; align-items: center; padding-left: 9px; }
.cortana { width: 21px; height: 21px; border: 3px solid #e6e6e6; border-radius: 50%; flex: none; }
.search-hint { font-size: 14px; color: #999; margin-left: 6px; width: 282px; white-space: nowrap; line-height: 20px; }
.tk-view { margin-left: 14px; }
.tk-fan { margin-left: 29px; }
.tk-ie { margin-left: 30px; }
.tk-swirl { margin-left: 29px; }
.tk-sep { width: 3px; height: 16px; border-left: 1px solid #444; border-right: 1px solid #444; }
.s-a { margin-left: 24px; }
.tk-edge { margin-left: 26px; }
.tk-ie2 { margin-left: 22px; }
.tk-folder { margin-left: 21px; }
.tk-g { margin-left: 20px; }
.tk-active { width: 42px; height: 40px; margin-left: 11px; background: #32383b; display: flex; align-items: center; justify-content: center; }
.tk-note { margin-left: 10px; }
.tk-blue { margin-left: 19px; }
.tk-under { position: absolute; bottom: 0; height: 2px; background: #7cb8f0; }
.u1 { left: 753px; width: 34px; }
.u2 { left: 792px; width: 42px; }
.u3 { left: 839px; width: 34px; }
.u4 { left: 882px; width: 34px; }
.s-b { margin-left: 26px; }
.tk-links { font-size: 12px; margin-left: 10px; width: 24px; color: #ddd; white-space: nowrap; line-height: 16px; }
.tk-cpu { width: 52px; margin-left: 12px; display: flex; flex-direction: column; align-items: center; font-size: 12px; line-height: 17px; color: #eee; white-space: nowrap; }
.tr-up { margin-left: 21px; }
.tr-bat { margin-left: 11px; }
.tr-wifi { margin-left: 10px; }
.tr-vol { margin-left: 8px; }
.tr-kb { margin-left: 9px; }
.tr-zh { font-size: 14px; font-weight: 700; margin-left: 9px; line-height: 18px; }
.tr-sogou { margin-left: 14px; }
.tk-clock { width: 68px; margin-left: 21px; display: flex; flex-direction: column; align-items: center; font-size: 12px; line-height: 18px; white-space: nowrap; }
.tr-notif { margin-left: 13px; }
```
